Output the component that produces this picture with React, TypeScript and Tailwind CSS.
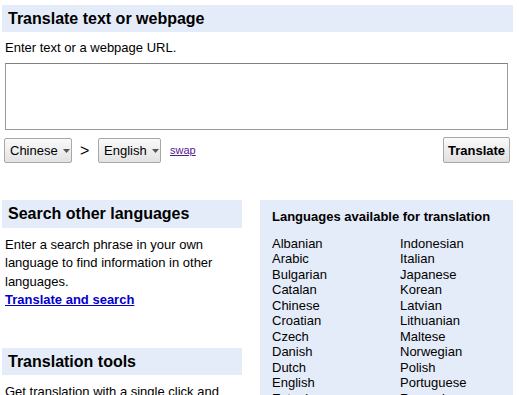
import React from "react";

const col1 = ["Albanian","Arabic","Bulgarian","Catalan","Chinese","Croatian","Czech","Danish","Dutch","English","Estonian"];
const col2 = ["Indonesian","Italian","Japanese","Korean","Latvian","Lithuanian","Maltese","Norwegian","Polish","Portuguese","Romanian"];

function Caret() {
  return (
    <svg width="7" height="4" viewBox="0 0 7 4" className="ml-[5px] mt-[1px]">
      <path d="M0 0 L7 0 L3.5 4 Z" fill="#555" />
    </svg>
  );
}

export default function App() {
  return (
    <div
      className="w-[519px] h-[395px] overflow-hidden bg-white text-black text-[13px]"
      style={{ fontFamily: '"Liberation Sans", Arial, sans-serif' }}
    >
      <div className="pt-[5px] pl-[2px]">
        <div className="w-[511px] h-[27px] bg-[#e5ecf9] pl-[6px] flex items-center text-[16px] font-bold leading-[18px]">
          Translate text or webpage
        </div>
      </div>
      <div className="pl-[5px] mt-[8px] leading-[15px]">Enter text or a webpage URL.</div>
      <div className="pl-[5px] mt-[8px]">
        <div className="w-[503px] h-[67px] border border-[#9a9a9a] border-t-[#808080] bg-white" />
      </div>
      <div className="flex items-start mt-[8px] pl-[4px] pr-[9px]">
        <div className="h-[25px] w-[68px] flex items-center pl-[5px] border border-[#a8a8a8] rounded-[2px] bg-gradient-to-b from-[#fafafa] to-[#e2e2e2] leading-[15px]">
          Chinese<Caret />
        </div>
        <div className="ml-[8px] mt-[4px] text-[16px] leading-[18px] w-[18px]">&gt;</div>
        <div className="h-[25px] w-[63px] flex items-center pl-[5px] border border-[#a8a8a8] rounded-[2px] bg-gradient-to-b from-[#fafafa] to-[#e2e2e2] leading-[15px]">
          English<Caret />
        </div>
        <a className="ml-[9px] mt-[6px] text-[11px] leading-[13px] text-[#551a8b] underline">swap</a>
        <div className="ml-auto -mt-[1px] h-[26px] w-[67px] flex items-center justify-center border border-[#a8a8a8] rounded-[2px] bg-gradient-to-b from-[#fafafa] to-[#e0e0e0] font-bold leading-[15px]">
          Translate
        </div>
      </div>
      <div className="flex mt-[37px] pl-[2px] items-start">
        <div className="w-[240px]">
          <div className="h-[28px] bg-[#e5ecf9] pl-[6px] flex items-center text-[16px] font-bold leading-[18px]">
            Search other languages
          </div>
          <div className="pl-[3px] mt-[8px] leading-[18.3px]">
            Enter a search phrase in your own language to find information in other languages.
            <br />
            <a className="font-bold text-[#0000cc] underline">Translate and search</a>
          </div>
          <div className="mt-[39px] h-[27px] bg-[#e5ecf9] pl-[6px] flex items-center text-[16px] font-bold leading-[18px]">
            Translation tools
          </div>
          <div className="pl-[3px] mt-[8px] leading-[18.3px]">
            Get translation with a single click and
          </div>
        </div>
        <div className="ml-[18px] w-[253px] h-[200px] bg-[#e5ecf9] pl-[12px] pt-[9px]">
          <div className="font-bold leading-[15px]">Languages available for translation</div>
          <div className="flex mt-[12px] leading-[15.45px]">
            <div className="w-[128px]">
              {col1.map((l) => (
                <div key={l}>{l}</div>
              ))}
            </div>
            <div>
              {col2.map((l) => (
                <div key={l}>{l}</div>
              ))}
            </div>
          </div>
        </div>
      </div>
    </div>
  );
}
